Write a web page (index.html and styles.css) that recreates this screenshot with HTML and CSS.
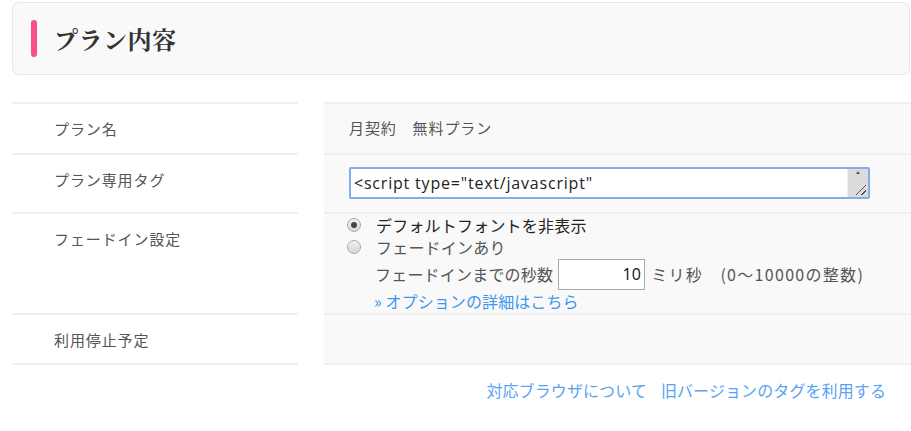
FILE: index.html
```html
<!DOCTYPE html>
<html lang="ja">
<head>
<meta charset="utf-8">
<link rel="stylesheet" href="styles.css">
</head>
<body>
<div class="page">
  <div class="card-head">
    <span class="accent"></span>
    <h1 class="title">プラン内容</h1>
  </div>

  <div class="plan-table">
    <div class="cell label">プラン名</div>
    <div class="cell value row1">月契約　無料プラン</div>

    <div class="cell label">プラン専用タグ</div>
    <div class="cell value row2">
      <div class="tag-box">
        <textarea class="tag-area" readonly>&lt;script type="text/javascript"</textarea>
        <div class="scroll"><span class="arrow"></span><span class="grip"></span></div>
      </div>
    </div>

    <div class="cell label">フェードイン設定</div>
    <div class="cell value row3">
      <div class="opt"><span class="radio checked"></span><span class="opt-strong">デフォルトフォントを非表示</span></div>
      <div class="opt"><span class="radio"></span><span class="opt-text">フェードインあり</span></div>
      <div class="fade-row">
        <span>フェードインまでの秒数</span>
        <span class="num-input">10</span>
        <span class="unit">ミリ秒　(0〜10000の整数)</span>
      </div>
      <a class="detail-link">» オプションの詳細はこちら</a>
    </div>

    <div class="cell label last">利用停止予定</div>
    <div class="cell value row4 last"></div>
  </div>

  <div class="footer-links">
    <a class="flink">対応ブラウザについて</a>
    <a class="flink">旧バージョンのタグを利用する</a>
  </div>
</div>
</body>
</html>
```

FILE: styles.css
```css
* { box-sizing: border-box; }
html, body { margin: 0; padding: 0; background: #fff; }
body {
  font-family: "Noto Sans CJK JP", "Noto Sans", sans-serif;
  color: #555;
  font-size: 15px;
  width: 911px;
  height: 431px;
  overflow: hidden;
}
.page { padding: 2px 0 0 12px; }

.card-head {
  width: 898px;
  height: 73px;
  background: #f9f9f9;
  border: 1px solid #e6e6e6;
  border-radius: 7px;
  display: flex;
  align-items: center;
  padding-left: 18px;
}
.accent {
  width: 6px;
  height: 37px;
  background: #fb4c8c;
  border-radius: 3px;
  margin-right: 17px;
}
.title {
  margin: 0;
  font-family: "Noto Serif CJK JP", "Noto Serif JP", "Liberation Serif", serif;
  font-weight: bold;
  font-size: 24px;
  color: #333;
  letter-spacing: 0.5px;
}

.plan-table {
  margin-top: 27px;
  display: grid;
  grid-template-columns: 286px 587px;
  column-gap: 26px;
}
.cell { border-top: 2px solid #efefef; }
.cell.last { border-bottom: 2px solid #efefef; }
.label {
  padding: 13px 0 0 42px;
  line-height: 24px;
  letter-spacing: 0.9px;
  color: #555;
}
.value {
  background: #f9f9f9;
  padding-left: 25px;
  letter-spacing: 0.9px;
}
.row1 { height: 51px; padding-top: 12px; line-height: 24px; }
.row2 { height: 59px; padding-top: 12px; }
.row3 { height: 101px; padding-top: 0; }
.row4 { height: 52px; }

.tag-box { position: relative; width: 521px; height: 32px; }
.tag-area {
  display: block;
  width: 521px;
  height: 32px;
  border: 2px solid #86abea;
  border-radius: 2px;
  background: #fff;
  resize: none;
  overflow: hidden;
  font-family: "Open Sans", "Noto Sans", sans-serif;
  font-size: 16px;
  line-height: 26px;
  color: #222;
  padding: 1px 3px 0 3px;
  letter-spacing: 0.8px;
  outline: none;
}
.scroll {
  position: absolute;
  right: 2px;
  top: 2px;
  width: 21px;
  height: 28px;
  background: #dcdcdc;
  border-left: 1px solid #eee;
}
.arrow {
  position: absolute;
  left: 8px;
  top: 2px;
  width: 0; height: 0;
  border-left: 2.5px solid transparent;
  border-right: 2.5px solid transparent;
  border-bottom: 3px solid #555;
}
.grip {
  position: absolute;
  right: 2px;
  bottom: 2px;
  width: 10px;
  height: 10px;
  background: linear-gradient(135deg, transparent 45%, #555 45%, #555 53%, transparent 53%, transparent 72%, #555 72%, #555 80%, transparent 80%);
}

.opt { display: flex; align-items: center; height: 22px; line-height: 22px; }
.radio {
  width: 14px; height: 14px;
  border-radius: 50%;
  border: 1px solid #a9a9a9;
  background: linear-gradient(#f2f2f2, #d6d6d6);
  margin: 0 15px 0 -2px;
  position: relative;
  flex: none;
}
.radio.checked::after {
  content: "";
  position: absolute;
  left: 3px; top: 3px;
  width: 6px; height: 6px;
  border-radius: 50%;
  background: #444;
}
.opt-strong { color: #222; font-size: 16px; letter-spacing: 0.2px; line-height: 22px; }
.opt-text { color: #555; font-size: 16px; letter-spacing: 0.2px; line-height: 22px; }

.fade-row {
  display: flex;
  align-items: center;
  height: 32px;
  padding-left: 26px;
  font-size: 16px;
  letter-spacing: 0.2px;
  color: #555;
}
.num-input {
  width: 87px;
  height: 31px;
  border: 1px solid #a9a9a9;
  background: #fff;
  color: #111;
  text-align: right;
  padding-right: 3px;
  line-height: 29px;
  font-family: "Open Sans", "Noto Sans", sans-serif;
  font-size: 16px;
  margin: 0 6px 0 5px;
}
.unit { letter-spacing: 1.3px; }
.detail-link {
  display: block;
  padding-left: 25px;
  line-height: 22px;
  font-size: 16px;
  color: #3d98ec;
  letter-spacing: 0.1px;
}

.footer-links {
  display: flex;
  justify-content: flex-end;
  gap: 14px;
  padding: 13px 25px 0 0;
  font-size: 16px;
  letter-spacing: 0.1px;
}
.flink { color: #5aa3f0; line-height: 24px; }
```
